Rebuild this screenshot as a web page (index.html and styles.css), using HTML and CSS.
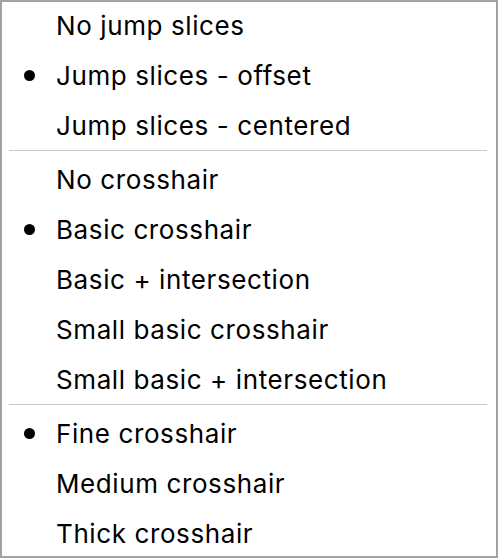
FILE: index.html
```html
<!DOCTYPE html>
<html>
<head>
<meta charset="utf-8">
<link rel="stylesheet" href="styles.css">
</head>
<body>
<div class="menu">
  <ul class="list">
    <li class="item"><span class="check"></span><span class="label">No jump slices</span></li>
    <li class="item checked"><span class="check"></span><span class="label">Jump slices - offset</span></li>
    <li class="item"><span class="check"></span><span class="label">Jump slices - centered</span></li>
    <li class="sep"></li>
    <li class="item"><span class="check"></span><span class="label">No crosshair</span></li>
    <li class="item checked"><span class="check"></span><span class="label">Basic crosshair</span></li>
    <li class="item"><span class="check"></span><span class="label">Basic + intersection</span></li>
    <li class="item"><span class="check"></span><span class="label">Small basic crosshair</span></li>
    <li class="item"><span class="check"></span><span class="label">Small basic + intersection</span></li>
    <li class="sep"></li>
    <li class="item checked"><span class="check"></span><span class="label">Fine crosshair</span></li>
    <li class="item"><span class="check"></span><span class="label">Medium crosshair</span></li>
    <li class="item"><span class="check"></span><span class="label">Thick crosshair</span></li>
  </ul>
</div>
</body>
</html>
```
FILE: styles.css
```css
html, body {
  margin: 0;
  padding: 0;
  background: #ffffff;
}
.menu {
  box-sizing: border-box;
  width: 498px;
  height: 558px;
  border: 2px solid #a3a3a3;
  background: #ffffff;
  overflow: hidden;
  font-family: Inter, "Noto Sans", sans-serif;
  font-size: 26px;
  letter-spacing: 0.6px;
  color: #000000;
}
.list {
  list-style: none;
  margin: -4px 0 0 0;
  padding: 0;
}
.item {
  box-sizing: border-box;
  height: 50px;
  padding: 5px 0 0 22px;
  line-height: 45px;
  display: flex;
  align-items: center;
  white-space: nowrap;
}
.check {
  flex: 0 0 11px;
  width: 11px;
  height: 11px;
  margin-right: 21px;
  border-radius: 50%;
}
.checked .check {
  background: #000000;
}
.sep {
  height: 1px;
  margin: 2px 9px 1px 7px;
  background: #c8c8c8;
}
```
